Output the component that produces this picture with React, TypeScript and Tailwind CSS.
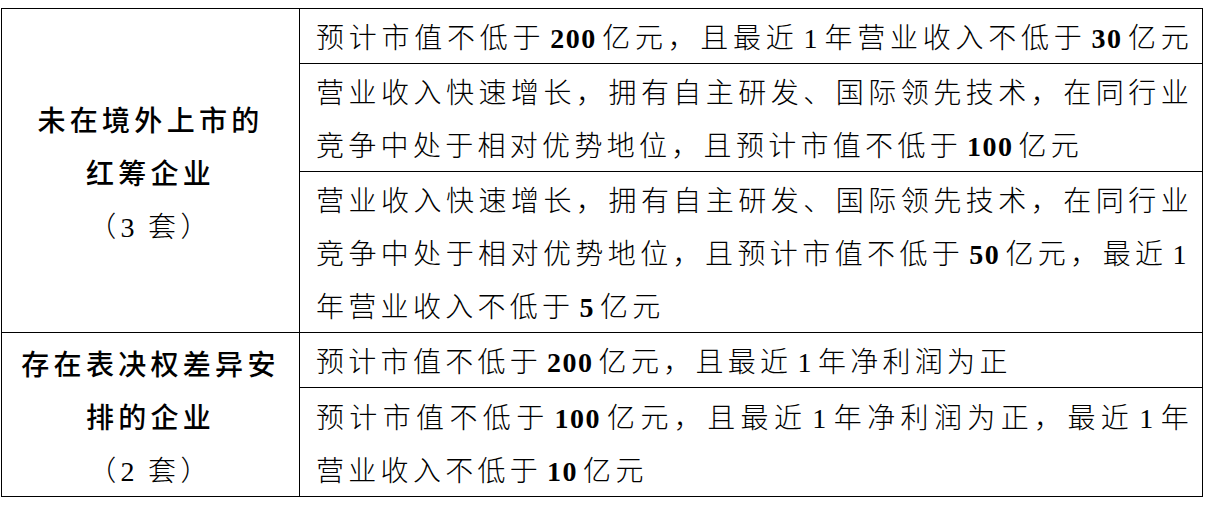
import clsx from "clsx";
import type { ReactNode } from "react";

function Num({
  children,
  bold = true,
  className = "px-[5px]",
}: {
  children: ReactNode;
  bold?: boolean;
  className?: string;
}) {
  return (
    <span
      className={clsx(
        "leading-none font-['Liberation_Serif',serif] tracking-[1.5px]",
        bold ? "font-bold" : "font-normal",
        className
      )}
    >
      {children}
    </span>
  );
}

// full = line that fills the cell (was wrapped in the original doc)
function Line({ children, full = false }: { children: ReactNode; full?: boolean }) {
  return (
    <div className={clsx("whitespace-nowrap", full ? "text-justify [text-align-last:justify]" : "text-left")}>
      {children}
    </div>
  );
}

function GroupCell({ rows, lines }: { rows: number; lines: ReactNode[] }) {
  return (
    <td rowSpan={rows} className="border border-black pt-[4px] text-center align-middle">
      {lines.map((l, i) => (
        <div key={i}>{l}</div>
      ))}
    </td>
  );
}

function RuleCell({ children }: { children: ReactNode }) {
  return (
    <td className="border border-black pt-[1px] pl-[16px] pr-[9px] align-middle font-light">{children}</td>
  );
}

export default function App() {
  return (
    <div className="min-h-[532px] bg-white pt-[8px] pl-[1px] text-black">
      <table className="w-[1202px] table-fixed border-collapse text-[28px] leading-[53px] tracking-[4.3px] font-['Noto_Sans_CJK_SC','Noto_Sans_CJK_JP',sans-serif]">
        <colgroup>
          <col className="w-[298px]" />
          <col />
        </colgroup>
        <tbody>
          <tr>
            <GroupCell
              rows={3}
              lines={[
                <span className="font-medium">未在境外上市的</span>,
                <span className="font-medium">红筹企业</span>,
                <span className="font-light">
                  （<Num bold={false} className="pr-[12px]">3</Num>套）
                </span>,
              ]}
            />
            <RuleCell>
              <Line full>
                预计市值不低于<Num>200</Num>亿元，且最近<Num bold={false}>1</Num>年营业收入不低于<Num>30</Num>亿元
              </Line>
            </RuleCell>
          </tr>
          <tr>
            <RuleCell>
              <Line full>营业收入快速增长，拥有自主研发、国际领先技术，在同行业</Line>
              <Line>
                竞争中处于相对优势地位，且预计市值不低于<Num>100</Num>亿元
              </Line>
            </RuleCell>
          </tr>
          <tr>
            <RuleCell>
              <Line full>营业收入快速增长，拥有自主研发、国际领先技术，在同行业</Line>
              <Line full>
                竞争中处于相对优势地位，且预计市值不低于<Num>50</Num>亿元，最近<Num bold={false}>1</Num>
              </Line>
              <Line>
                年营业收入不低于<Num>5</Num>亿元
              </Line>
            </RuleCell>
          </tr>
          <tr>
            <GroupCell
              rows={2}
              lines={[
                <span className="font-medium">存在表决权差异安</span>,
                <span className="font-medium">排的企业</span>,
                <span className="font-light">
                  （<Num bold={false} className="pr-[12px]">2</Num>套）
                </span>,
              ]}
            />
            <RuleCell>
              <Line>
                预计市值不低于<Num>200</Num>亿元，且最近<Num bold={false}>1</Num>年净利润为正
              </Line>
            </RuleCell>
          </tr>
          <tr>
            <RuleCell>
              <Line full>
                预计市值不低于<Num>100</Num>亿元，且最近<Num bold={false}>1</Num>年净利润为正，最近<Num bold={false}>1</Num>年
              </Line>
              <Line>
                营业收入不低于<Num>10</Num>亿元
              </Line>
            </RuleCell>
          </tr>
        </tbody>
      </table>
    </div>
  );
}
